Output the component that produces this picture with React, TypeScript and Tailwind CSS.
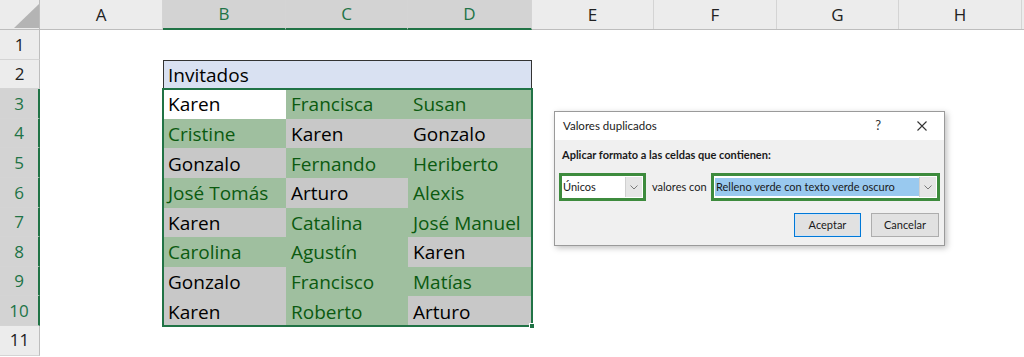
import { ReactNode } from "react";

type Fill = "w" | "g" | "k";

const columns = [
  { label: "A", w: "w-[123px]", sel: false },
  { label: "B", w: "w-[123px]", sel: true },
  { label: "C", w: "w-[122px]", sel: true },
  { label: "D", w: "w-[124px]", sel: true },
  { label: "E", w: "w-[122px]", sel: false },
  { label: "F", w: "w-[123px]", sel: false },
  { label: "G", w: "w-[122px]", sel: false },
  { label: "H", w: "w-[123px]", sel: false },
];

const data: [string, Fill][][] = [
  [["Karen", "w"], ["Francisca", "g"], ["Susan", "g"]],
  [["Cristine", "g"], ["Karen", "k"], ["Gonzalo", "k"]],
  [["Gonzalo", "k"], ["Fernando", "g"], ["Heriberto", "g"]],
  [["José Tomás", "g"], ["Arturo", "k"], ["Alexis", "g"]],
  [["Karen", "k"], ["Catalina", "g"], ["José Manuel", "g"]],
  [["Carolina", "g"], ["Agustín", "g"], ["Karen", "k"]],
  [["Gonzalo", "k"], ["Francisco", "g"], ["Matías", "g"]],
  [["Karen", "k"], ["Roberto", "g"], ["Arturo", "k"]],
];

const fillClass: Record<Fill, string> = {
  w: "bg-white text-black",
  g: "bg-[#9fbf9f] text-[#0b5a10]",
  k: "bg-[#c8c8c8] text-black",
};

const cellWidths = ["w-[123px]", "w-[122px]", "w-[124px]"];

function Chevron() {
  return (
    <svg width="8" height="5" viewBox="0 0 8 5" fill="none">
      <path d="M0.5 0.5 L4 4 L7.5 0.5" stroke="#7a7a7a" strokeWidth="1" />
    </svg>
  );
}

function Combo({ children, w }: { children: ReactNode; w: string }) {
  return (
    <div className={`${w} shrink-0 h-[28px] border-[3px] border-[#3d8b3d] bg-white flex items-stretch`}>
      <div className="flex-1 flex items-center min-w-0 pl-[1px]">{children}</div>
      <div className="w-[17px] my-[1px] mr-[1px] bg-[#e6e6e6] border-l border-[#d0d0d0] flex items-center justify-center">
        <Chevron />
      </div>
    </div>
  );
}

function Dialog() {
  return (
    <div className="absolute left-[554px] top-[111px] w-[391px] h-[135px] border border-[#9a9a9a] bg-[#f0f0f0] shadow-[2px_2px_6px_rgba(0,0,0,0.25)] flex flex-col font-['Lato',sans-serif] text-[#1a1a1a]">
      <div className="h-[28px] bg-white flex items-center pl-[8px] pr-[17px]">
        <span className="text-[11.5px] flex-1">Valores duplicados</span>
        <span className="text-[13px] mr-[36px] text-[#333]">?</span>
        <svg width="10" height="10" viewBox="0 0 10 10">
          <path d="M0.5 0.5 L9.5 9.5 M9.5 0.5 L0.5 9.5" stroke="#333" strokeWidth="1.1" />
        </svg>
      </div>
      <div className="pl-[7px] pt-[9px] text-[11px] font-bold h-[23px] leading-none">
        Aplicar formato a las celdas que contienen:
      </div>
      <div className="mt-[10px] pl-[4px] flex items-center text-[11px]">
        <Combo w="w-[87px]">
          <span>Únicos</span>
        </Combo>
        <span className="ml-[6px] mr-[6px] w-[53px] shrink-0 whitespace-nowrap">valores con</span>
        <Combo w="w-[229px]">
          <span className="bg-[#99c9ef] h-[18px] flex-1 flex items-center pl-[1px] whitespace-nowrap">
            Relleno verde con texto verde oscuro
          </span>
        </Combo>
      </div>
      <div className="mt-[12px] pr-[5px] flex justify-end gap-[10px] text-[11px]">
        <button className="w-[67px] h-[24px] bg-[#e1e1e1] border border-[#0078d7] shadow-[inset_0_0_0_1px_#cfe3f5]">
          Aceptar
        </button>
        <button className="w-[68px] h-[24px] bg-[#e1e1e1] border border-[#adadad]">Cancelar</button>
      </div>
    </div>
  );
}

export default function App() {
  const rowNums = [1, 2, 3, 4, 5, 6, 7, 8, 9, 10, 11];
  return (
    <div className="relative w-[1024px] h-[357px] overflow-hidden bg-white font-['Open_Sans',sans-serif]">
      {/* Column headers */}
      <div className="flex h-[30px] bg-[#ececec] border-b border-[#bdbdbd]">
        <div className="w-[40px] shrink-0 border-r border-[#bdbdbd] relative">
          <svg className="absolute left-[14px] top-[4px]" width="25" height="24" viewBox="0 0 25 24">
            <path d="M25 0 L25 24 L0 24 Z" fill="#b4b4b4" />
          </svg>
        </div>
        {columns.map((c) => (
          <div
            key={c.label}
            className={`${c.w} shrink-0 flex items-center justify-center text-[17px] border-r border-[#d4d4d4] ${
              c.sel ? "bg-[#d3d3d3] text-[#217346] border-b-2 border-b-[#217346] mb-[-1px]" : "text-[#222]"
            }`}
          >
            {c.label}
          </div>
        ))}
        <div className="flex-1" />
      </div>

      <div className="flex">
        {/* Row headers */}
        <div className="w-[40px] shrink-0 flex flex-col">
          {rowNums.map((n) => {
            const sel = n >= 3 && n <= 10;
            return (
              <div
                key={n}
                className={`h-[29.6px] flex items-center justify-center text-[17px] border-b border-[#d4d4d4] ${
                  sel
                    ? "bg-[#d3d3d3] text-[#217346] border-r-2 border-r-[#217346]"
                    : "bg-[#ececec] text-[#222] border-r border-r-[#bdbdbd]"
                }`}
              >
                {n}
              </div>
            );
          })}
        </div>

        {/* Column A */}
        <div className="w-[123px] shrink-0" />

        {/* Table B:D */}
        <div className="w-[369px] shrink-0 flex flex-col">
          <div className="h-[29.6px]" />
          <div className="h-[29.6px] bg-[#d9e1f2] border border-b-0 border-[#333] flex items-center pl-[4px] pt-[1px] text-[19px] text-black">
            Invitados
          </div>
          <div className="relative">
            {data.map((row, i) => (
              <div key={i} className="flex">
                {row.map(([name, f], j) => (
                  <div
                    key={j}
                    className={`${cellWidths[j]} h-[29.6px] flex items-center pl-[5px] pt-[2px] text-[19px] leading-none whitespace-nowrap ${fillClass[f]}`}
                  >
                    {name}
                  </div>
                ))}
              </div>
            ))}
            <div className="absolute -inset-[1px] border-2 border-[#217346] pointer-events-none" />
            <div className="absolute -right-[3px] -bottom-[3px] w-[6px] h-[6px] bg-[#217346] border border-white" />
          </div>
        </div>

        <div className="flex-1" />
      </div>

      <Dialog />
    </div>
  );
}
